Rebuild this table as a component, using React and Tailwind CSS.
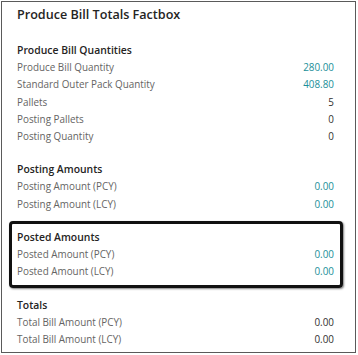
import React from "react";

const sections = [
  {
    title: "Produce Bill Quantities",
    rows: [
      ["Produce Bill Quantity", "280.00", true],
      ["Standard Outer Pack Quantity", "408.80", true],
      ["Pallets", "5", false],
      ["Posting Pallets", "0", false],
      ["Posting Quantity", "0", false],
    ],
  },
  {
    title: "Posting Amounts",
    rows: [
      ["Posting Amount (PCY)", "0.00", true],
      ["Posting Amount (LCY)", "0.00", true],
    ],
  },
  {
    title: "Posted Amounts",
    highlight: true,
    rows: [
      ["Posted Amount (PCY)", "0.00", true],
      ["Posted Amount (LCY)", "0.00", true],
    ],
  },
  {
    title: "Totals",
    rows: [
      ["Total Bill Amount (PCY)", "0.00", false],
      ["Total Bill Amount (LCY)", "0.00", false],
    ],
  },
];

function Section({ s }) {
  return (
    <div className="relative">
      {s.highlight && (
        <div className="absolute left-[-8px] right-[-9px] top-[-8px] bottom-[-7px] border-[3px] border-[#111] rounded-[4px] shadow-[1px_1px_2px_rgba(0,0,0,0.5)]" />
      )}
      <div className="h-[17px] leading-[17px] text-[10.4px] text-[#252423] font-semibold">{s.title}</div>
      {s.rows.map(([l, v, link]) => (
        <div key={l} className="flex justify-between h-[17.3px] leading-[17.3px] text-[9.9px]">
          <span className="text-[#656463]">{l}</span>
          <span className={link ? "text-[#1a8f99]" : "text-[#323130]"}>{v}</span>
        </div>
      ))}
    </div>
  );
}

export default function App() {
  return (
    <div className="w-[358px] h-[355px] bg-white p-[1px]" style={{ fontFamily: '"Open Sans", "Noto Sans", sans-serif' }}>
      <div className="h-[352px] w-[355px] border border-[#5a5a5a] pl-[15px] pr-[21px] pt-[1px]">
        <div className="text-[12.6px] font-semibold text-[#252423] h-[24px] leading-[24px]">Produce Bill Totals Factbox</div>
        <div className="flex flex-col gap-[16px] mt-[15px]">
          {sections.map((s) => (
            <Section key={s.title} s={s} />
          ))}
        </div>
      </div>
    </div>
  );
}
